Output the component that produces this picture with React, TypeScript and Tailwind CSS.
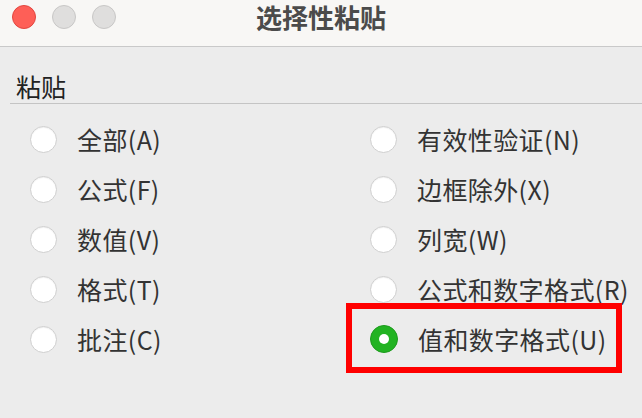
import { useState } from "react";

const font = { fontFamily: '"Noto Sans CJK SC", "Liberation Sans", sans-serif' };

const left = ["全部(A)", "公式(F)", "数值(V)", "格式(T)", "批注(C)"];
const right = ["有效性验证(N)", "边框除外(X)", "列宽(W)", "公式和数字格式(R)", "值和数字格式(U)"];

function Radio({ checked }: { checked: boolean }) {
  if (checked) {
    return (
      <span className="flex h-[28px] w-[28px] shrink-0 items-center justify-center rounded-full border border-[#1d9a1d] bg-[#22b322]">
        <span className="h-[10px] w-[10px] rounded-full bg-white" />
      </span>
    );
  }
  return (
    <span className="h-[27px] w-[27px] shrink-0 rounded-full border border-[#cfcfcf] bg-white shadow-[inset_0_1px_1px_rgba(0,0,0,0.06)]" />
  );
}

export default function App() {
  const [selected, setSelected] = useState("值和数字格式(U)");

  const item = (label: string) => (
    <button
      key={label}
      type="button"
      onClick={() => setSelected(label)}
      className="relative flex h-[50px] items-center gap-[20px] text-left text-[25px] leading-none tracking-[0.4px] text-[#333]"
    >
      <Radio checked={selected === label} />
      <span>{label}</span>
      {label === "值和数字格式(U)" ? (
        <span className="pointer-events-none absolute left-[-24px] top-[-11px] h-[70px] w-[276px] border-[6px] border-[#ff0000]" />
      ) : null}
    </button>
  );

  return (
    <div className="h-[418px] w-[642px] overflow-hidden bg-[#ececec]" style={font}>
      <div className="grid h-[47px] grid-cols-[1fr_auto_1fr] border-b border-[#c9c9c9] bg-[#f8f7f5]">
        <div className="flex gap-[16px] pl-[12px] pt-[5px]">
          <span className="h-[24px] w-[24px] rounded-full border border-[#e2463f] bg-[#fe5f57]" />
          <span className="h-[24px] w-[24px] rounded-full border border-[#c8c7c6] bg-[#dfdedd]" />
          <span className="h-[24px] w-[24px] rounded-full border border-[#c8c7c6] bg-[#dfdedd]" />
        </div>
        <div className="pt-[2px] text-[26px] font-bold leading-[30px] text-[#4b4b4b]">
          选择性粘贴
        </div>
        <div />
      </div>

      <div className="pl-[10px] pt-[24px]">
        <div className="border-b border-[#c4c4c4] pb-[2px] pl-[6px] text-[25px] leading-[30px] text-[#222]">
          粘贴
        </div>
      </div>

      <div className="grid grid-cols-[340px_1fr] pl-[30px] pt-[10px]">
        <div className="flex flex-col">{left.map(item)}</div>
        <div className="flex flex-col">{right.map(item)}</div>
      </div>
    </div>
  );
}
